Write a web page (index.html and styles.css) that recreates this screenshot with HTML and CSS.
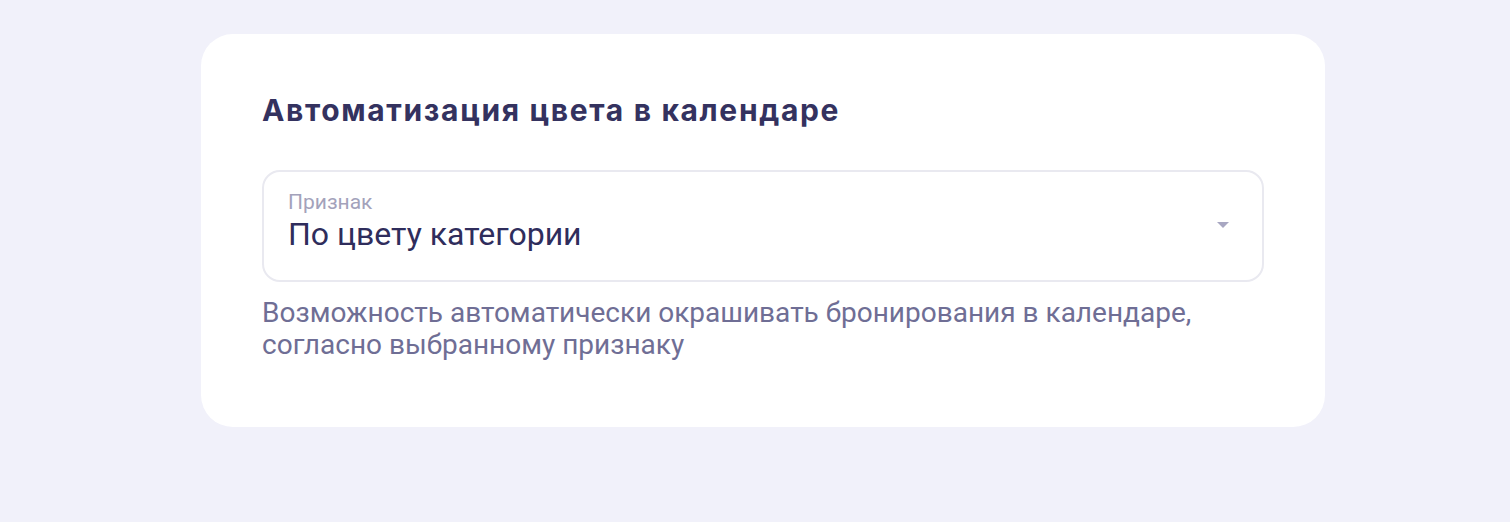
FILE: index.html
```html
<!DOCTYPE html>
<html lang="ru">
<head>
<meta charset="utf-8">
<title>Автоматизация цвета в календаре</title>
<link rel="stylesheet" href="styles.css">
</head>
<body>
<main class="page">
  <section class="card">
    <h2 class="card-title">Автоматизация цвета в календаре</h2>
    <div class="select">
      <div class="select-text">
        <span class="select-label">Признак</span>
        <span class="select-value">По цвету категории</span>
      </div>
      <svg class="select-arrow" width="12" height="6" viewBox="0 0 12 6"><path d="M0 0H12L6 6Z" fill="#a8a7c2"/></svg>
    </div>
    <p class="hint">Возможность автоматически окрашивать бронирования в календаре,<br>согласно выбранному признаку</p>
  </section>
</main>
</body>
</html>
```
FILE: styles.css
```css
html, body {
  margin: 0;
  padding: 0;
  background: #f1f1fa;
}
.page {
  padding: 34px 0 0 201px;
}
.card {
  box-sizing: border-box;
  width: 1124px;
  height: 393px;
  background: #ffffff;
  border-radius: 32px;
  padding: 58px 61px 0 61px;
}
.card-title {
  margin: 0;
  font-family: Inter, "Noto Sans", sans-serif;
  font-weight: 700;
  font-size: 30px;
  line-height: 36px;
  letter-spacing: 1.65px;
  color: #34325f;
}
.select {
  margin-top: 42px;
  box-sizing: border-box;
  height: 112px;
  border: 2px solid #e9e9f0;
  border-radius: 18px;
  display: flex;
  align-items: flex-start;
  justify-content: space-between;
  padding: 18px 33px 0 24px;
}
.select-text {
  display: flex;
  flex-direction: column;
  gap: 1px;
  font-family: Roboto, sans-serif;
}
.select-label {
  font-size: 21px;
  line-height: 24px;
  color: #a3a2bb;
}
.select-value {
  font-size: 32px;
  line-height: 38px;
  color: #2f2d5c;
}
.select-arrow {
  display: block;
  align-self: center;
  margin-top: -20px;
}
.hint {
  margin: 15px 0 0 0;
  font-family: Roboto, sans-serif;
  font-size: 28px;
  line-height: 32px;
  color: #6f6e95;
}
```
